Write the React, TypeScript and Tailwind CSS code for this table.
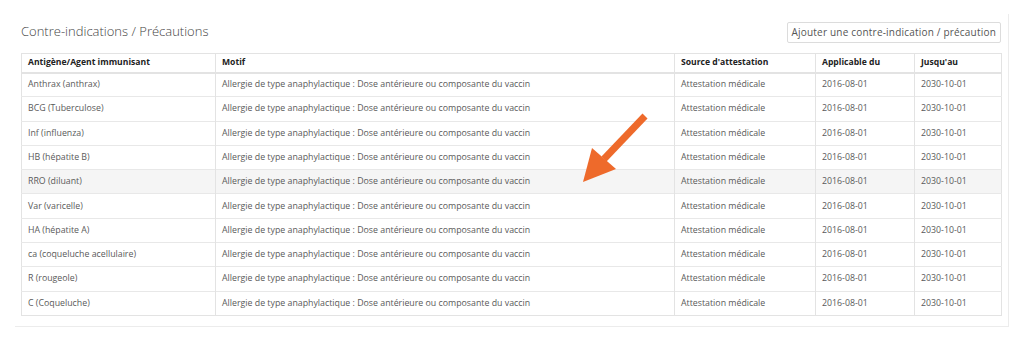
import React from "react";

const rows: [string][] = [
  ["Anthrax (anthrax)"],
  ["BCG (Tuberculose)"],
  ["Inf (influenza)"],
  ["HB (hépatite B)"],
  ["RRO (diluant)"],
  ["Var (varicelle)"],
  ["HA (hépatite A)"],
  ["ca (coqueluche acellulaire)"],
  ["R (rougeole)"],
  ["C (Coqueluche)"],
];

const motif = "Allergie de type anaphylactique : Dose antérieure ou composante du vaccin";

export default function App() {
  return (
    <div
      className="relative h-[342px] w-[1024px] overflow-hidden bg-white"
      style={{ fontFamily: '"Open Sans", "Liberation Sans", sans-serif' }}
    >
      <div className="ml-[15px] mt-[14px] h-[313px] w-[994px] border-b border-r border-[#ececec] pl-[6px] pr-[7px]">
        {/* header */}
        <div className="flex h-[39px] items-start justify-between">
          <h2 className="mt-[8px] text-[13px] font-light text-[#444]">Contre-indications / Précautions</h2>
          <button
            type="button"
            className="mt-[8px] h-[21px] rounded-[2px] border border-[#dcdcdc] bg-white px-[4px] text-[10px] tracking-[0.2px] text-[#555]"
          >
            Ajouter une contre-indication / précaution
          </button>
        </div>

        <table className="w-[980px] table-fixed border-collapse border border-[#e3e3e3] text-[8.8px] text-[#5a5a5a]">
          <colgroup>
            <col className="w-[194px]" />
            <col className="w-[459px]" />
            <col className="w-[141px]" />
            <col className="w-[99px]" />
            <col className="w-[87px]" />
          </colgroup>
          <thead>
            <tr className="h-[19px] border-b-2 border-[#e3e3e3] text-left text-[8.6px] font-bold text-[#222]">
              <th className="border-r border-[#e3e3e3] px-[6px]">Antigène/Agent immunisant</th>
              <th className="border-r border-[#e3e3e3] px-[6px]">Motif</th>
              <th className="border-r border-[#e3e3e3] px-[6px]">Source d'attestation</th>
              <th className="border-r border-[#e3e3e3] px-[6px]">Applicable du</th>
              <th className="px-[6px]">Jusqu'au</th>
            </tr>
          </thead>
          <tbody>
            {rows.map(([name], i) => (
              <tr
                key={name}
                className={`h-[24.3px] border-t border-[#e8e8e8] ${i === 4 ? "bg-[#f5f5f5]" : ""}`}
              >
                <td className="border-r border-[#e3e3e3] px-[6px]">{name}</td>
                <td className="border-r border-[#e3e3e3] px-[6px]">{motif}</td>
                <td className="border-r border-[#e3e3e3] px-[6px]">Attestation médicale</td>
                <td className="border-r border-[#e3e3e3] px-[6px]">2016-08-01</td>
                <td className="px-[6px]">2030-10-01</td>
              </tr>
            ))}
          </tbody>
        </table>
      </div>

      {/* annotation arrow */}
      <svg className="pointer-events-none absolute left-0 top-0" width="1024" height="342">
        <line x1="645" y1="116" x2="604" y2="159" stroke="#ee6a2b" strokeWidth="7" />
        <polygon points="583,182 592,148 616,169" fill="#ee6a2b" />
      </svg>
    </div>
  );
}
